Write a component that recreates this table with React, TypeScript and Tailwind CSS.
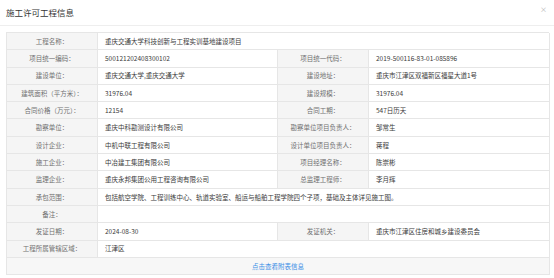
import React from 'react';

type Cell = { label: string; value: string; wide?: boolean };

const rows: Cell[][] = [
  [{ label: '工程名称：', value: '重庆交通大学科技创新与工程实训基地建设项目', wide: true }],
  [
    { label: '项目统一编码：', value: '500121202408300102' },
    { label: '项目统一代码：', value: '2019-500116-83-01-085896' },
  ],
  [
    { label: '建设单位：', value: '重庆交通大学,重庆交通大学' },
    { label: '建设地址：', value: '重庆市江津区双福新区福星大道1号' },
  ],
  [
    { label: '建筑面积（平方米）：', value: '31976.04' },
    { label: '建设规模：', value: '31976.04' },
  ],
  [
    { label: '合同价格（万元）：', value: '12154' },
    { label: '合同工期：', value: '547日历天' },
  ],
  [
    { label: '勘察单位：', value: '重庆中科勘测设计有限公司' },
    { label: '勘察单位项目负责人：', value: '邹常生' },
  ],
  [
    { label: '设计企业：', value: '中机中联工程有限公司' },
    { label: '设计单位项目负责人：', value: '蒋程' },
  ],
  [
    { label: '施工企业：', value: '中冶建工集团有限公司' },
    { label: '项目经理名称：', value: '陈崇彬' },
  ],
  [
    { label: '监理企业：', value: '重庆永邦集团公用工程咨询有限公司' },
    { label: '总监理工程师：', value: '李月辉' },
  ],
  [
    {
      label: '承包范围：',
      value: '包括航空学院、工程训练中心、轨道实验室、船运与船舶工程学院四个子项，基础及主体详见施工图。',
      wide: true,
    },
  ],
  [{ label: '备注：', value: '', wide: true }],
  [
    { label: '发证日期：', value: '2024-08-30' },
    { label: '发证机关：', value: '重庆市江津区住房和城乡建设委员会' },
  ],
  [{ label: '工程所属管辖区域：', value: '江津区', wide: true }],
];

const Label = ({ text }: { text: string }) => (
  <div className="flex items-center justify-center border-r border-b border-[#e6e6e6] bg-[#f5f5f5] text-[#707070]">
    {text}
  </div>
);

const Value = ({ text, wide }: { text: string; wide?: boolean }) => (
  <div
    className={`flex items-center border-r border-b border-[#e6e6e6] bg-white px-[7px] text-[#3a3a3a] whitespace-nowrap overflow-hidden ${
      wide ? 'col-span-3' : ''
    }`}
  >
    {text}
  </div>
);

export default function App() {
  return (
    <div
      className="w-[554px] h-[278px] bg-white overflow-hidden"
      style={{ fontFamily: '"Noto Sans CJK SC", "Noto Sans", sans-serif' }}
    >
      <div className="flex h-[26px] items-center justify-between border-b border-[#eeeeee] pl-[6px] pr-[7px]">
        <span className="text-[8.5px] text-[#333]">施工许可工程信息</span>
        <span className="mb-[6px] text-[7px] leading-none text-[#b0b0b0]">×</span>
      </div>
      <div className="ml-[6px] mt-[6px] w-[543px] border-t border-l border-[#e6e6e6] text-[6.5px] leading-none">
        <div className="grid grid-cols-[91px_180px_91px_181px] auto-rows-[17.3px]">
          {rows.map((row, i) =>
            row.map((c, j) => (
              <React.Fragment key={`${i}-${j}`}>
                <Label text={c.label} />
                <Value text={c.value} wide={c.wide} />
              </React.Fragment>
            ))
          )}
          <div className="col-span-4 flex items-center justify-center border-r border-b border-[#e6e6e6] bg-[#f7f7f7] text-[#3a8ee6]">
            点击查看附表信息
          </div>
        </div>
      </div>
    </div>
  );
}
